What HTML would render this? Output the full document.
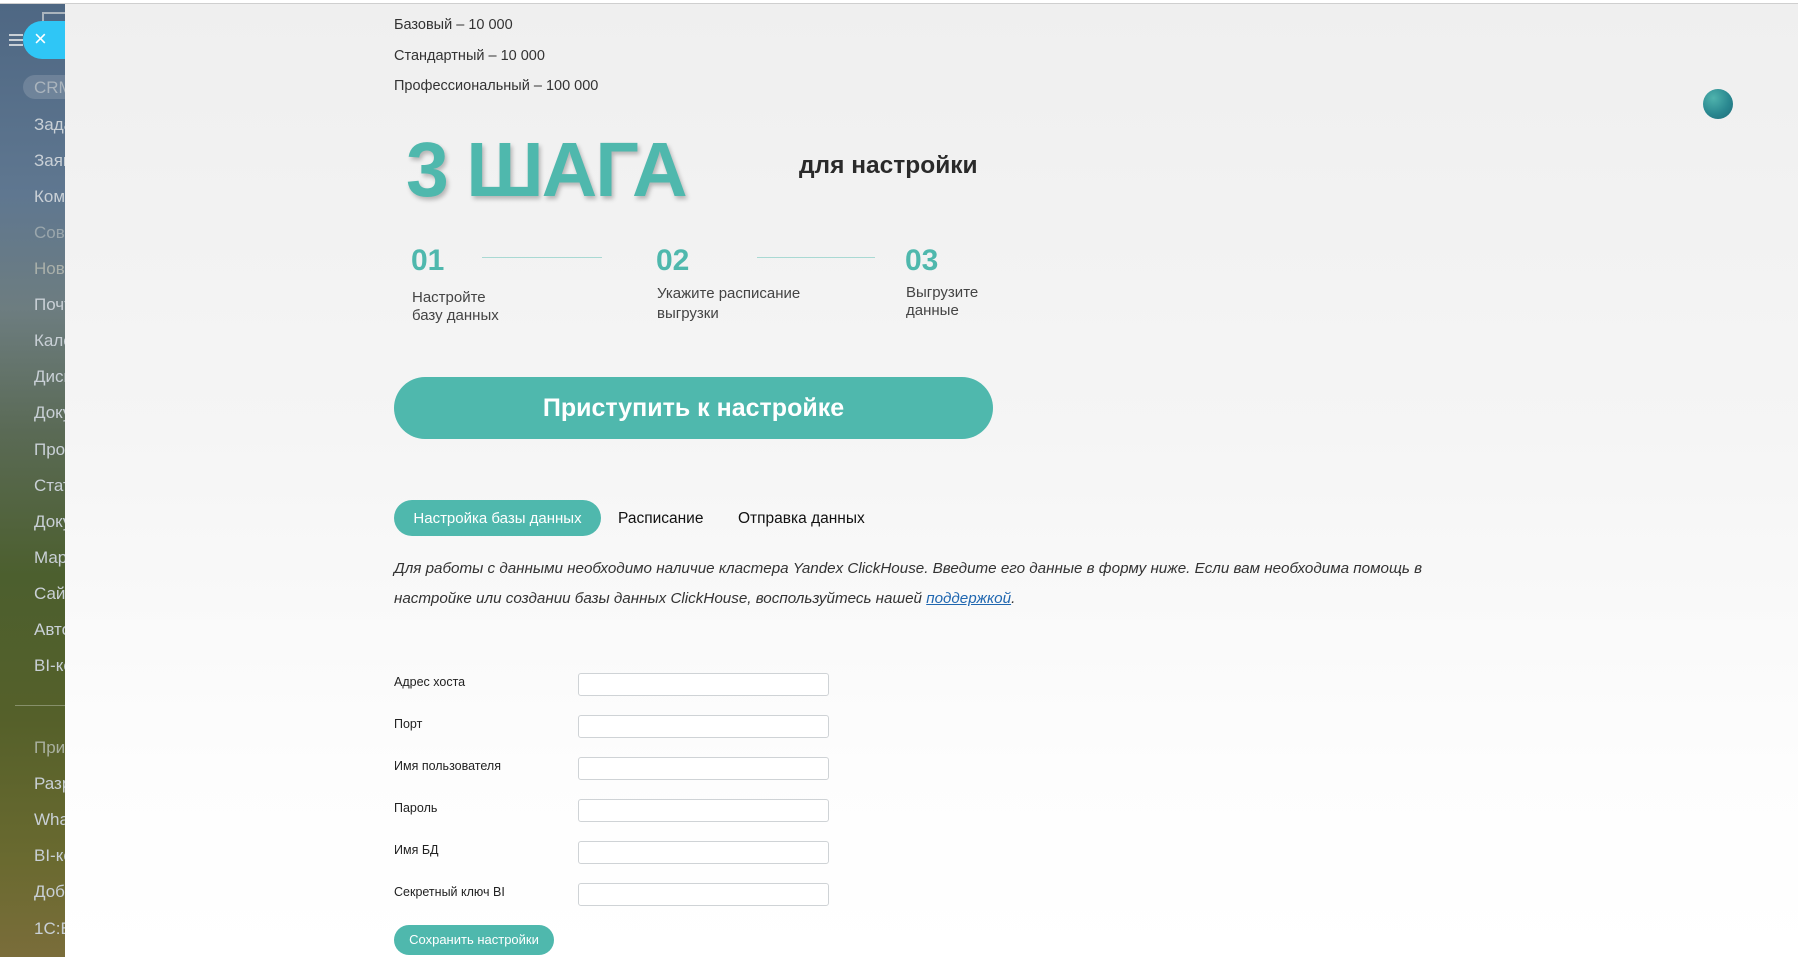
<!DOCTYPE html>
<html><head><meta charset="utf-8"><style>
*{margin:0;padding:0;box-sizing:border-box}
body{width:1798px;height:957px;overflow:hidden;font-family:"Liberation Sans","DejaVu Sans",sans-serif;position:relative;background:#fff}
.side{position:absolute;left:0;top:4px;width:65px;height:953px;background:linear-gradient(180deg,#4e6783 0%,#5f7790 20%,#6d7d80 32%,#5a6a55 45%,#4c5f2e 60%,#55602a 75%,#6a6a30 90%,#7a6d3a 100%);overflow:hidden}
.side div{position:absolute;left:34px;color:#c9d0d6;font-size:17px;white-space:nowrap}
.panel{position:absolute;left:65px;top:4px;width:1733px;height:953px;background:linear-gradient(180deg,#efefef 0%,#f5f5f5 45%,#fdfdfd 80%,#fff 100%)}
.topline{position:absolute;left:0;top:0;width:1798px;height:4px;background:#fff;border-bottom:1px solid #cfcfcf}
.t{position:absolute;white-space:nowrap}
.teal{color:#4fb8ad}
.inp{position:absolute;left:578px;width:251px;height:23px;background:#fff;border:1px solid #cfd3d6;border-radius:3px}
.lbl{position:absolute;left:394px;font-size:12.5px;color:#222}
</style></head><body>
<div class="topline"></div>
<div class="side">
<div style="left:23px;top:71px;width:60px;height:24px;border-radius:12px;background:rgba(255,255,255,.15)"></div>
<div style="top:74px;color:#aab4bd">CRM</div>
<div style="top:111px">Задачи</div>
<div style="top:147px">Заявки</div>
<div style="top:183px">Компания</div>
<div style="top:219px;color:#9aa6ac">Совместно</div>
<div style="top:255px;color:#aab0aa">Новости</div>
<div style="top:291px">Почта</div>
<div style="top:327px">Календарь</div>
<div style="top:363px">Диск</div>
<div style="top:399px">Документы</div>
<div style="top:436px">Проекты</div>
<div style="top:472px">Статистика</div>
<div style="top:508px">Документы</div>
<div style="top:544px">Маркет</div>
<div style="top:580px">Сайты</div>
<div style="top:616px">Автоматизация</div>
<div style="top:652px">BI-конструктор</div>
<div style="left:15px;top:701px;width:60px;height:1px;background:rgba(255,255,255,.3)"></div>
<div style="top:734px;color:#a9b0a0">Приложения</div>
<div style="top:770px">Разработчикам</div>
<div style="top:806px">WhatsApp</div>
<div style="top:842px">BI-коннектор</div>
<div style="top:878px">Добавить</div>
<div style="top:915px">1С:Битрикс</div>
<div style="left:9px;top:30px;width:14px;height:2px;background:#c9d0d6"></div>
<div style="left:9px;top:35px;width:14px;height:2px;background:#c9d0d6"></div>
<div style="left:9px;top:40px;width:14px;height:2px;background:#c9d0d6"></div>
<div style="left:42px;top:8px;width:30px;height:10px;border:2px solid #aab4bd;border-bottom:none"></div>
</div>
<div style="position:absolute;left:23px;top:21px;width:46px;height:38px;border-radius:19px 0 0 19px;background:#2fc6f6;color:#fff;font-size:22px;line-height:36px;padding-left:11px">×</div>
<div class="panel"></div>
<div class="t" style="left:394px;top:17px;font-size:14.5px;color:#333">Базовый – 10 000</div>
<div class="t" style="left:394px;top:48px;font-size:14.5px;color:#333">Стандартный – 10 000</div>
<div class="t" style="left:394px;top:78px;font-size:14.5px;color:#333">Профессиональный – 100 000</div>
<div class="t teal" style="left:406px;top:126px;font-size:77px;font-weight:bold;letter-spacing:-2px;text-shadow:2px 3px 4px rgba(0,0,0,.25)">3 ШАГА</div>
<div class="t" style="left:799px;top:152px;font-size:24.5px;font-weight:bold;color:#2a2a2a">для настройки</div>
<div class="t teal" style="left:411px;top:244px;font-size:30px;font-weight:bold">01</div>
<div class="t teal" style="left:656px;top:244px;font-size:30px;font-weight:bold">02</div>
<div class="t teal" style="left:905px;top:244px;font-size:30px;font-weight:bold">03</div>
<div style="position:absolute;left:482px;top:257px;width:120px;height:1px;background:#a9d9d3"></div>
<div style="position:absolute;left:757px;top:257px;width:118px;height:1px;background:#a9d9d3"></div>
<div class="t" style="left:412px;top:289px;font-size:15px;line-height:18px;color:#444">Настройте<br>базу данных</div>
<div class="t" style="left:657px;top:284px;font-size:15px;line-height:20px;color:#444">Укажите расписание<br>выгрузки</div>
<div class="t" style="left:906px;top:284px;font-size:15px;line-height:18px;color:#444">Выгрузите<br>данные</div>
<div style="position:absolute;left:394px;top:377px;width:599px;height:62px;border-radius:31px;background:#4fb8ad;color:#fff;font-size:25px;font-weight:bold;text-align:center;line-height:62px">Приступить к настройке</div>
<div style="position:absolute;left:394px;top:500px;width:207px;height:36px;border-radius:18px;background:#4fb8ad;color:#fff;font-size:15px;text-align:center;line-height:37px">Настройка базы данных</div>
<div class="t" style="left:618px;top:510px;font-size:15.5px;color:#111">Расписание</div>
<div class="t" style="left:738px;top:510px;font-size:15.5px;color:#111">Отправка данных</div>
<div class="t" style="left:394px;top:560px;font-size:15.2px;font-style:italic;color:#333">Для работы с данными необходимо наличие кластера Yandex ClickHouse. Введите его данные в форму ниже. Если вам необходима помощь в</div>
<div class="t" style="left:394px;top:590px;font-size:15.2px;font-style:italic;color:#333">настройке или создании базы данных ClickHouse, воспользуйтесь нашей <span style="color:#2067b0;text-decoration:underline">поддержкой</span>.</div>
<div class="lbl" style="top:675px">Адрес хоста</div>
<div class="lbl" style="top:717px">Порт</div>
<div class="lbl" style="top:759px">Имя пользователя</div>
<div class="lbl" style="top:801px">Пароль</div>
<div class="lbl" style="top:843px">Имя БД</div>
<div class="lbl" style="top:885px">Секретный ключ BI</div>
<div class="inp" style="top:673px"></div>
<div class="inp" style="top:715px"></div>
<div class="inp" style="top:757px"></div>
<div class="inp" style="top:799px"></div>
<div class="inp" style="top:841px"></div>
<div class="inp" style="top:883px"></div>
<div style="position:absolute;left:394px;top:925px;width:160px;height:30px;border-radius:15px;background:#4fb8ad;color:#fff;font-size:13px;text-align:center;line-height:30px">Сохранить настройки</div>
<div style="position:absolute;left:1703px;top:89px;width:30px;height:30px;border-radius:50%;background:radial-gradient(circle at 35% 30%,#4fb3ad,#2a8890 55%,#1d6a78)"></div>
</body></html>
